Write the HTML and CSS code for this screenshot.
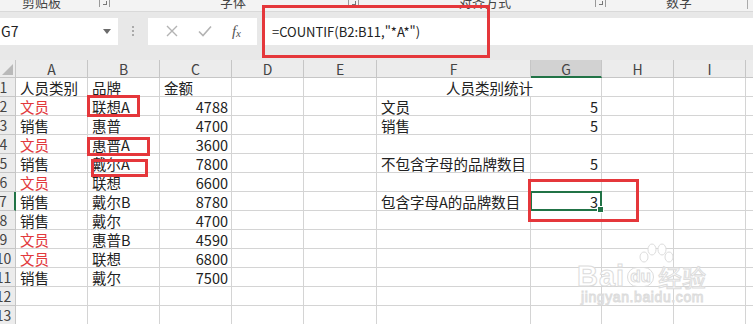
FILE: index.html
```html
<!DOCTYPE html>
<html lang="zh-CN">

<head>
    <meta charset="utf-8">
    <title>COUNTIF 包含字母A</title>
    <link rel="stylesheet" href="styles.css">
</head>

<body>
    <div class="page">
        <!-- ribbon group labels (cut off at top) -->
        <div class="ribbon">
            <div class="group g1"><span class="glabel">剪贴板</span><span class="launcher"></span></div>
            <div class="group g2"><span class="glabel">字体</span><span class="launcher"></span></div>
            <div class="group g3"><span class="glabel">对齐方式</span><span class="launcher"></span></div>
            <div class="group g4"><span class="glabel">数字</span><span class="gsep"></span></div>
        </div>

        <!-- name box + formula bar -->
        <div class="formula-band">
            <div class="name-box">
                <span>G7</span>
                <svg class="drop" width="8" height="5" viewBox="0 0 8 5"><path d="M0 0h8L4 5z" fill="#6b6b6b"/></svg>
            </div>
            <div class="grip"><i></i><i></i><i></i></div>
            <div class="fx-buttons">
                <svg width="12" height="12" viewBox="0 0 12 12"><path d="M1 1l10 10M11 1L1 11" stroke="#b3b3b3" stroke-width="1.4"/></svg>
                <svg width="14" height="12" viewBox="0 0 14 12"><path d="M1 6.5l4 4L13 1.5" stroke="#b3b3b3" stroke-width="1.6" fill="none"/></svg>
                <span class="fx">f<sub>x</sub></span>
            </div>
            <div class="formula-input">=COUNTIF(B2:B11,"*A*")</div>
        </div>

        <div class="sheet-wrap">
            <div class="sheet">
                <!-- header -->
                <div class="corner"><span class="tri"></span></div>
                <div class="ch">A</div>
                <div class="ch">B</div>
                <div class="ch">C</div>
                <div class="ch">D</div>
                <div class="ch">E</div>
                <div class="ch">F</div>
                <div class="ch active">G</div>
                <div class="ch">H</div>
                <div class="ch">I</div>
                <div class="ch"></div>

                <!-- row 1 -->
                <div class="rh">1</div>
                <div class="c">人员类别</div>
                <div class="c">品牌</div>
                <div class="c">金额</div>
                <div class="c"></div>
                <div class="c"></div>
                <div class="c merged">人员类别统计</div>
                <div class="c"></div>
                <div class="c"></div>
                <div class="c"></div>

                <!-- row 2 -->
                <div class="rh">2</div>
                <div class="c red">文员</div>
                <div class="c">联想A</div>
                <div class="c n">4788</div>
                <div class="c"></div>
                <div class="c"></div>
                <div class="c">文员</div>
                <div class="c n">5</div>
                <div class="c"></div>
                <div class="c"></div>
                <div class="c"></div>

                <!-- row 3 -->
                <div class="rh">3</div>
                <div class="c">销售</div>
                <div class="c">惠普</div>
                <div class="c n">4700</div>
                <div class="c"></div>
                <div class="c"></div>
                <div class="c">销售</div>
                <div class="c n">5</div>
                <div class="c"></div>
                <div class="c"></div>
                <div class="c"></div>

                <!-- row 4 -->
                <div class="rh">4</div>
                <div class="c red">文员</div>
                <div class="c">惠普A</div>
                <div class="c n">3600</div>
                <div class="c"></div>
                <div class="c"></div>
                <div class="c"></div>
                <div class="c"></div>
                <div class="c"></div>
                <div class="c"></div>
                <div class="c"></div>

                <!-- row 5 -->
                <div class="rh">5</div>
                <div class="c">销售</div>
                <div class="c">戴尔A</div>
                <div class="c n">7800</div>
                <div class="c"></div>
                <div class="c"></div>
                <div class="c">不包含字母的品牌数目</div>
                <div class="c n">5</div>
                <div class="c"></div>
                <div class="c"></div>
                <div class="c"></div>

                <!-- row 6 -->
                <div class="rh">6</div>
                <div class="c red">文员</div>
                <div class="c">联想</div>
                <div class="c n">6600</div>
                <div class="c"></div>
                <div class="c"></div>
                <div class="c"></div>
                <div class="c"></div>
                <div class="c"></div>
                <div class="c"></div>
                <div class="c"></div>

                <!-- row 7 -->
                <div class="rh active">7</div>
                <div class="c">销售</div>
                <div class="c">戴尔B</div>
                <div class="c n">8780</div>
                <div class="c"></div>
                <div class="c"></div>
                <div class="c">包含字母A的品牌数目</div>
                <div class="c n selected">3<span class="handle"></span></div>
                <div class="c"></div>
                <div class="c"></div>
                <div class="c"></div>

                <!-- row 8 -->
                <div class="rh">8</div>
                <div class="c">销售</div>
                <div class="c">戴尔</div>
                <div class="c n">4700</div>
                <div class="c"></div>
                <div class="c"></div>
                <div class="c"></div>
                <div class="c"></div>
                <div class="c"></div>
                <div class="c"></div>
                <div class="c"></div>

                <!-- row 9 -->
                <div class="rh">9</div>
                <div class="c red">文员</div>
                <div class="c">惠普B</div>
                <div class="c n">4590</div>
                <div class="c"></div>
                <div class="c"></div>
                <div class="c"></div>
                <div class="c"></div>
                <div class="c"></div>
                <div class="c"></div>
                <div class="c"></div>

                <!-- row 10 -->
                <div class="rh">10</div>
                <div class="c red">文员</div>
                <div class="c">联想</div>
                <div class="c n">6800</div>
                <div class="c"></div>
                <div class="c"></div>
                <div class="c"></div>
                <div class="c"></div>
                <div class="c"></div>
                <div class="c"></div>
                <div class="c"></div>

                <!-- row 11 -->
                <div class="rh">11</div>
                <div class="c">销售</div>
                <div class="c">戴尔</div>
                <div class="c n">7500</div>
                <div class="c"></div>
                <div class="c"></div>
                <div class="c"></div>
                <div class="c"></div>
                <div class="c"></div>
                <div class="c"></div>
                <div class="c"></div>

                <!-- row 12 -->
                <div class="rh">12</div>
                <div class="c"></div>
                <div class="c"></div>
                <div class="c"></div>
                <div class="c"></div>
                <div class="c"></div>
                <div class="c"></div>
                <div class="c"></div>
                <div class="c"></div>
                <div class="c"></div>
                <div class="c"></div>

                <!-- row 13 -->
                <div class="rh">13</div>
                <div class="c"></div>
                <div class="c"></div>
                <div class="c"></div>
                <div class="c"></div>
                <div class="c"></div>
                <div class="c"></div>
                <div class="c"></div>
                <div class="c"></div>
                <div class="c"></div>
                <div class="c"></div>
            </div>
        </div>

        <!-- red annotation boxes drawn over the screenshot -->
        <div class="mark mark-formula"></div>
        <div class="mark mark-b2"></div>
        <div class="mark mark-b4"></div>
        <div class="mark mark-b5"></div>
        <div class="mark mark-g7"></div>

        <!-- watermark -->
        <div class="watermark">
            <svg class="paw" width="40" height="20" viewBox="0 0 40 20">
                <ellipse cx="9" cy="14" rx="4" ry="5" />
                <ellipse cx="17" cy="6.5" rx="4" ry="5.5" />
                <ellipse cx="27" cy="6.5" rx="4" ry="5.5" />
                <ellipse cx="34" cy="14" rx="4" ry="5" />
            </svg>
            <div class="wm-main"><span class="wm-bai">Bai</span><span class="wm-du">du</span><span class="wm-cn">经验</span></div>
            <div class="wm-url">jingyan.baidu.com</div>
        </div>
    </div>
</body>

</html>
```

FILE: styles.css
```css
body {
    margin: 0;
    padding: 0;
    background-color: #ffffff;
    font-family: "Noto Sans CJK SC", "Noto Sans", sans-serif;
    color: #222222;
}

.page {
    position: relative;
    width: 753px;
    height: 324px;
    overflow: hidden;
}

/* ribbon */
.ribbon {
    display: flex;
    height: 11px;
    overflow: hidden;
    background-color: #f3f3f3;
    border-bottom: 1px solid #d9d9d9;
}

.group {
    display: flex;
    align-items: flex-start;
    box-sizing: border-box;
}

.g1 {
    width: 112px;
}

.g2 {
    width: 249px;
}

.g3 {
    width: 247px;
}

.g4 {
    width: 143px;
}

.glabel {
    font-size: 13px;
    line-height: 13px;
    margin-top: -5px;
    color: #444444;
}

.g1 .glabel {
    margin-left: 22px;
}

.g2 .glabel {
    margin-left: 108px;
}

.g3 .glabel {
    margin-left: 98px;
}

.g4 .glabel {
    margin-left: 58px;
}

.launcher {
    margin-left: auto;
    margin-right: 2px;
    width: 9px;
    height: 7px;
    border-left: 1px solid #999;
    border-right: 1px solid #999;
    position: relative;
}

.launcher::after {
    content: '';
    position: absolute;
    left: 3px;
    top: 1px;
    width: 3px;
    height: 3px;
    border-right: 1px solid #777;
    border-bottom: 1px solid #777;
}

.gsep {
    margin-left: auto;
    margin-right: 3px;
    width: 1px;
    height: 9px;
    background-color: #aaa;
}

/* formula bar */
.formula-band {
    display: flex;
    align-items: center;
    height: 48px;
    background-color: #e8e8e8;
    box-sizing: border-box;
}

.name-box {
    display: flex;
    align-items: center;
    justify-content: space-between;
    width: 118px;
    height: 27px;
    margin-top: -10px;
    padding: 0 7px 0 1px;
    box-sizing: border-box;
    background-color: #ffffff;
    font-size: 14px;
    color: #222;
}

.grip {
    display: flex;
    flex-direction: column;
    gap: 2px;
    width: 30px;
    align-items: center;
    margin-top: -10px;
}

.grip i {
    width: 2px;
    height: 2px;
    background-color: #aaa;
}

.fx-buttons {
    display: flex;
    align-items: center;
    justify-content: space-around;
    width: 109px;
    height: 27px;
    margin-top: -10px;
    padding: 0 6px 0 8px;
    box-sizing: border-box;
    background-color: #ffffff;
}

.fx {
    font-family: "Liberation Serif", serif;
    font-style: italic;
    font-size: 15px;
    color: #555;
}

.fx sub {
    font-size: 11px;
    vertical-align: -1px;
}

.formula-input {
    flex: 1;
    height: 27px;
    margin-top: -10px;
    margin-left: 5px;
    padding-left: 10px;
    background-color: #ffffff;
    font-size: 13px;
    line-height: 27px;
    color: #222;
}

/* sheet */
.sheet-wrap {
    overflow: hidden;
    background-color: #e8e8e8;
}

.sheet {
    display: grid;
    grid-template-columns: 24px 72px 72px 72px 72px 73px 154px 71px 72px 72px 40px;
    grid-template-rows: 18px repeat(13, 19px);
    margin-left: -8px;
    font-size: 14.5px;
}

.sheet>div {
    box-sizing: border-box;
    border-right: 1px solid #d4d4d4;
    border-bottom: 1px solid #d4d4d4;
    white-space: nowrap;
    overflow: hidden;
}

.corner {
    position: relative;
    background-color: #ececec;
    border-color: #c6c6c6 !important;
}

.tri {
    position: absolute;
    right: 2px;
    bottom: 2px;
    width: 0;
    height: 0;
    border-left: 11px solid transparent;
    border-bottom: 11px solid #b9b9b9;
}

.ch {
    background-color: #ececec;
    border-color: #c6c6c6 !important;
    text-align: center;
    line-height: 18px;
    color: #444;
    font-size: 14px;
}

.ch.active {
    background-color: #d2d2d2;
    border-bottom: 2px solid #217346 !important;
}

.rh {
    background-color: #ececec;
    border-color: #c6c6c6 !important;
    text-align: center;
    line-height: 19px;
    color: #444;
    font-size: 14px;
}

.rh.active {
    border-right: 2px solid #217346 !important;
}

.c {
    background-color: #ffffff;
    padding: 1px 3px 0 4px;
    line-height: 18px;
}

.merged {
    grid-column: span 2;
    text-align: center;
}

.n {
    text-align: right;
}

.red {
    color: #e2383c;
}

.sheet>.selected {
    position: relative;
    overflow: visible;
    border: 2px solid #217346;
    margin: -1px 0 0 -1px;
    padding: 0 2px 0 0;
}

.handle {
    position: absolute;
    right: -4px;
    bottom: -4px;
    width: 5px;
    height: 5px;
    background-color: #217346;
    border: 1px solid #ffffff;
}

/* red marks */
.mark {
    position: absolute;
    border: 3px solid #e5373b;
    box-sizing: border-box;
}

.mark-formula {
    left: 262px;
    top: 5px;
    width: 228px;
    height: 53px;
}

.mark-b2 {
    left: 87px;
    top: 95px;
    width: 53px;
    height: 22px;
}

.mark-b4 {
    left: 87px;
    top: 137px;
    width: 63px;
    height: 19px;
}

.mark-b5 {
    left: 91px;
    top: 159px;
    width: 57px;
    height: 18px;
}

.mark-g7 {
    left: 528px;
    top: 179px;
    width: 111px;
    height: 43px;
}

/* watermark */
.watermark {
    position: absolute;
    left: 577px;
    top: 243px;
    width: 135px;
    color: #ffffff;
    -webkit-text-stroke: 1px #dcdcdc;
    font-family: "Liberation Sans", sans-serif;
}

.paw {
    display: block;
    margin-left: 58px;
    fill: #ffffff;
    stroke: #dcdcdc;
}

.wm-main {
    display: flex;
    align-items: center;
    font-size: 29px;
    line-height: 27px;
    font-weight: bold;
}

.wm-bai {
    letter-spacing: 1px;
}

.wm-du {
    margin-left: 2px;
    font-size: 17px;
    border: 1px solid #dcdcdc;
    border-radius: 10px;
    padding: 0 2px;
    line-height: 18px;
}

.wm-cn {
    margin-left: 4px;
    font-family: "Noto Sans CJK SC", sans-serif;
    font-size: 24px;
    font-weight: normal;
}

.wm-url {
    font-size: 14px;
    line-height: 14px;
    margin-left: 4px;
    letter-spacing: 0.6px;
}
```
